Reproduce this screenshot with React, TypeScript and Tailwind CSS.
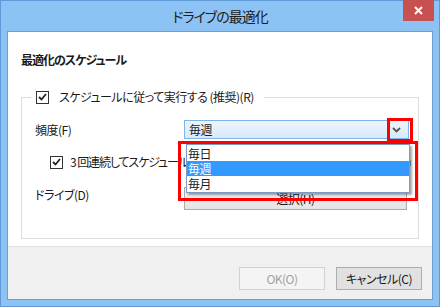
import React from 'react';

const font = "font-['Meiryo_UI','Noto_Sans_CJK_JP',sans-serif] [font-feature-settings:'palt']";

function Check() {
  return (
    <span className="flex h-[13px] w-[13px] shrink-0 items-center justify-center border border-[#333] bg-white">
      <svg width="9" height="8" viewBox="0 0 9 8">
        <path d="M1 4 L3.5 6.5 L8 1" fill="none" stroke="#222" strokeWidth="1.8" />
      </svg>
    </span>
  );
}

export default function App() {
  return (
    <div className={`relative flex h-[307px] w-[440px] flex-col border border-[#5f9ad6] bg-[#8cc3f4] text-[12px] tracking-[-0.5px] text-[#1a1a1a] ${font}`}>
      {/* title bar */}
      <div className="relative flex h-[30px] items-center justify-center">
        <span className="text-[14px] tracking-[-1px] text-[#202020]">ドライブの最適化</span>
        <div className="absolute right-[5px] top-[-1px] flex h-[21px] w-[31px] items-center justify-center bg-[#c75050]">
          <svg width="9" height="9" viewBox="0 0 9 9">
            <path d="M1 1 L8 8 M8 1 L1 8" stroke="#fff" strokeWidth="2" />
          </svg>
        </div>
      </div>

      <div className="mx-[6px] mb-[6px] flex flex-1 flex-col border border-[#6e9fd3]">
        <div className="flex h-[214px] flex-col bg-white px-[13px]">
          <div className="mt-[20px] h-[16px] font-bold leading-[16px] tracking-[-1px]">最適化のスケジュール</div>

          <div className="mt-[29px] flex h-[142px] flex-col border border-[#dcdcdc]">
            <div className="-mt-[8px] ml-[9px] flex h-[14px] w-fit items-center gap-[10px] bg-white pl-[5px] pr-[10px]">
              <Check />
              <span className="leading-[14px]">スケジュールに従って実行する (推奨)(R)</span>
            </div>

            <div className="mt-[16px] flex h-[19px] items-center pl-[13px]">
              <span className="w-[149px]">頻度(F)</span>
              <div className="flex h-[19px] w-[225px] items-center justify-between border border-[#7eb4ea] bg-gradient-to-b from-[#edf5fc] to-[#d8e9fa] pl-[4px] pr-[7px]">
                <span className="leading-[16px]">毎週</span>
                <svg width="9" height="6" viewBox="0 0 9 6">
                  <path d="M1 1 L4.5 4.5 L8 1" fill="none" stroke="#555" strokeWidth="1.8" />
                </svg>
              </div>
            </div>

            <div className="mt-[16px] flex h-[14px] items-center gap-[7px] whitespace-nowrap pl-[28px]">
              <Check />
              <span className="leading-[14px] tracking-[-1.1px]">3 回連続してスケジュールされた実行が行われなかった場合に通知する(N)</span>
            </div>

            <div className="mt-[18px] flex items-start pl-[13px]">
              <span className="w-[149px] leading-[16px]">ドライブ(D)</span>
              <div className="flex h-[23px] w-[223px] items-center justify-center border border-[#acacac] bg-gradient-to-b from-[#f0f0f0] to-[#e5e5e5]">
                選択(H)
              </div>
            </div>
          </div>
        </div>

        <div className="flex flex-1 items-start justify-end gap-[11px] border-t border-[#dfdfdf] bg-[#f0f0f0] pr-[10px] pt-[20px]">
          <div className="flex h-[23px] w-[86px] items-center justify-center border border-[#d2d2d2] bg-[#f4f4f4] text-[#a0a0a0]">
            OK(O)
          </div>
          <div className="flex h-[23px] w-[86px] items-center justify-center border border-[#adadad] bg-[#e1e1e1]">
            キャンセル(C)
          </div>
        </div>
      </div>

      {/* open drop-down list */}
      <div className="absolute left-[185px] top-[143px] flex w-[224px] flex-col border border-[#7a9cc4] bg-white py-[1px] shadow-[2px_2px_2px_rgba(0,0,0,0.35)]">
        <div className="h-[15px] pl-[1px] leading-[15px]">毎日</div>
        <div className="h-[15px] bg-[#3399ff] pl-[1px] leading-[15px] text-white">毎週</div>
        <div className="h-[15px] pl-[1px] leading-[15px]">毎月</div>
      </div>

      {/* red annotation boxes */}
      <div className="absolute left-[386px] top-[117px] h-[24px] w-[26px] border-[3px] border-[#ff0000]" />
      <div className="absolute left-[177px] top-[140px] h-[60px] w-[240px] border-[3px] border-[#ff0000]" />
    </div>
  );
}
